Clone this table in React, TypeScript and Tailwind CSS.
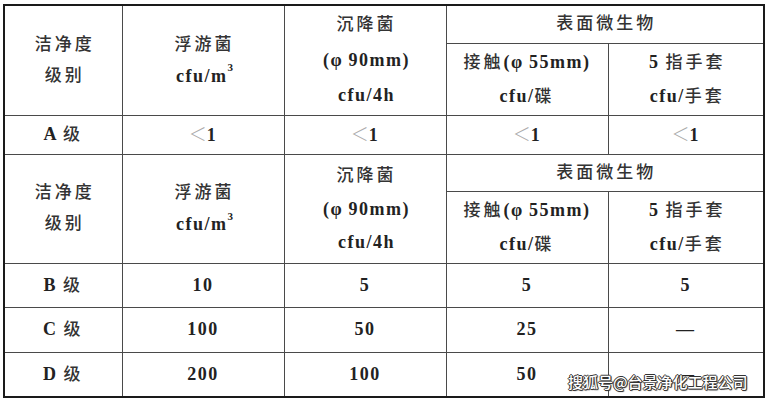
const line = "border border-[#4a4a4a]"

function Cn({ children }: { children: React.ReactNode }) {
  return <span className="tracking-[3px] text-[17px] font-medium text-[#333]">{children}</span>
}

function Lt({ children }: { children: React.ReactNode }) {
  return <span className="font-bold text-[18px] tracking-[1.5px] text-[#222]">{children}</span>
}

function Lt1() {
  return (
    <span>
      <span className="font-['Noto_Sans_CJK_SC'] font-light text-[#aaa] text-[18px]">＜</span>
      <Lt>1</Lt>
    </span>
  )
}

function HeaderRows({ top, bottom, gapA, gapB }: { top: string; bottom: string; gapA: string; gapB: string }) {
  return (
    <>
      <tr className={top}>
        <td rowSpan={2} className={line}>
          <div className={`flex flex-col items-center pl-[3px] ${gapA}`}>
            <Cn>洁净度</Cn>
            <Cn>级别</Cn>
          </div>
        </td>
        <td rowSpan={2} className={line}>
          <div className={`flex flex-col items-center pl-[3px] ${gapA}`}>
            <Cn>浮游菌</Cn>
            <Lt>
              cfu/m<sup className="text-[11px] align-[5px] tracking-normal">3</sup>
            </Lt>
          </div>
        </td>
        <td rowSpan={2} className={line}>
          <div className={`flex flex-col items-center pl-[3px] ${gapB}`}>
            <Cn>沉降菌</Cn>
            <Lt>(φ{"\u2009"}90mm)</Lt>
            <Lt>cfu/4h</Lt>
          </div>
        </td>
        <td colSpan={2} className={line}>
          <div className="flex justify-center pl-[3px]">
            <Cn>表面微生物</Cn>
          </div>
        </td>
      </tr>
      <tr className={bottom}>
        <td className={line}>
          <div className="flex flex-col items-center gap-[11px]">
            <span>
              <Cn>接触</Cn>
              <Lt>(φ{"\u2009"}55mm)</Lt>
            </span>
            <span>
              <Lt>cfu/</Lt>
              <Cn>碟</Cn>
            </span>
          </div>
        </td>
        <td className={line}>
          <div className="flex flex-col items-center gap-[11px] pl-[3px]">
            <span>
              <Lt>5 </Lt>
              <Cn>指手套</Cn>
            </span>
            <span>
              <Lt>cfu/</Lt>
              <Cn>手套</Cn>
            </span>
          </div>
        </td>
      </tr>
    </>
  )
}

const ROWS = [
  { grade: "B", values: ["10", "5", "5", "5"] },
  { grade: "C", values: ["100", "50", "25", "—"] },
  { grade: "D", values: ["200", "100", "50", "—"] },
]

export default function App() {
  return (
    <div className="relative w-[768px] h-[400px] bg-white pl-[3px] pt-[4px] font-['Liberation_Serif','Noto_Sans_CJK_SC',serif] text-[16px] leading-[22px]">
      <table className="table-fixed border-collapse border-2 border-[#1a1a1a] w-[760px] text-center">
        <colgroup>
          <col className="w-[118px]" />
          <col className="w-[162px]" />
          <col className="w-[162px]" />
          <col className="w-[162px]" />
          <col className="w-[156px]" />
        </colgroup>
        <tbody>
          <HeaderRows top="h-[38px]" bottom="h-[72px]" gapA="gap-[9px]" gapB="gap-[13px]" />
          <tr className="h-[39px]">
            <td className={line}>
              <Lt>A </Lt>
              <Cn>级</Cn>
            </td>
            <td className={line}><Lt1 /></td>
            <td className={line}><Lt1 /></td>
            <td className={line}><Lt1 /></td>
            <td className={line}><Lt1 /></td>
          </tr>
          <HeaderRows top="h-[37px]" bottom="h-[72px]" gapA="gap-[9px]" gapB="gap-[11px]" />
          {ROWS.map((r) => (
            <tr key={r.grade} className="h-[44.5px]">
              <td className={line}>
                <Lt>{r.grade} </Lt>
                <Cn>级</Cn>
              </td>
              {r.values.map((v, i) => (
                <td key={i} className={line}>
                  <Lt>{v}</Lt>
                </td>
              ))}
            </tr>
          ))}
        </tbody>
      </table>
      <div className="absolute left-[568px] top-[371px] font-['Noto_Sans_CJK_SC',sans-serif] text-[15px] font-medium text-white [text-shadow:1px_0_0_#333,-1px_0_0_#333,0_1px_0_#333,0_-1px_0_#333,1px_1px_1px_#333]">
        搜狐号@台景净化工程公司
      </div>
    </div>
  )
}
